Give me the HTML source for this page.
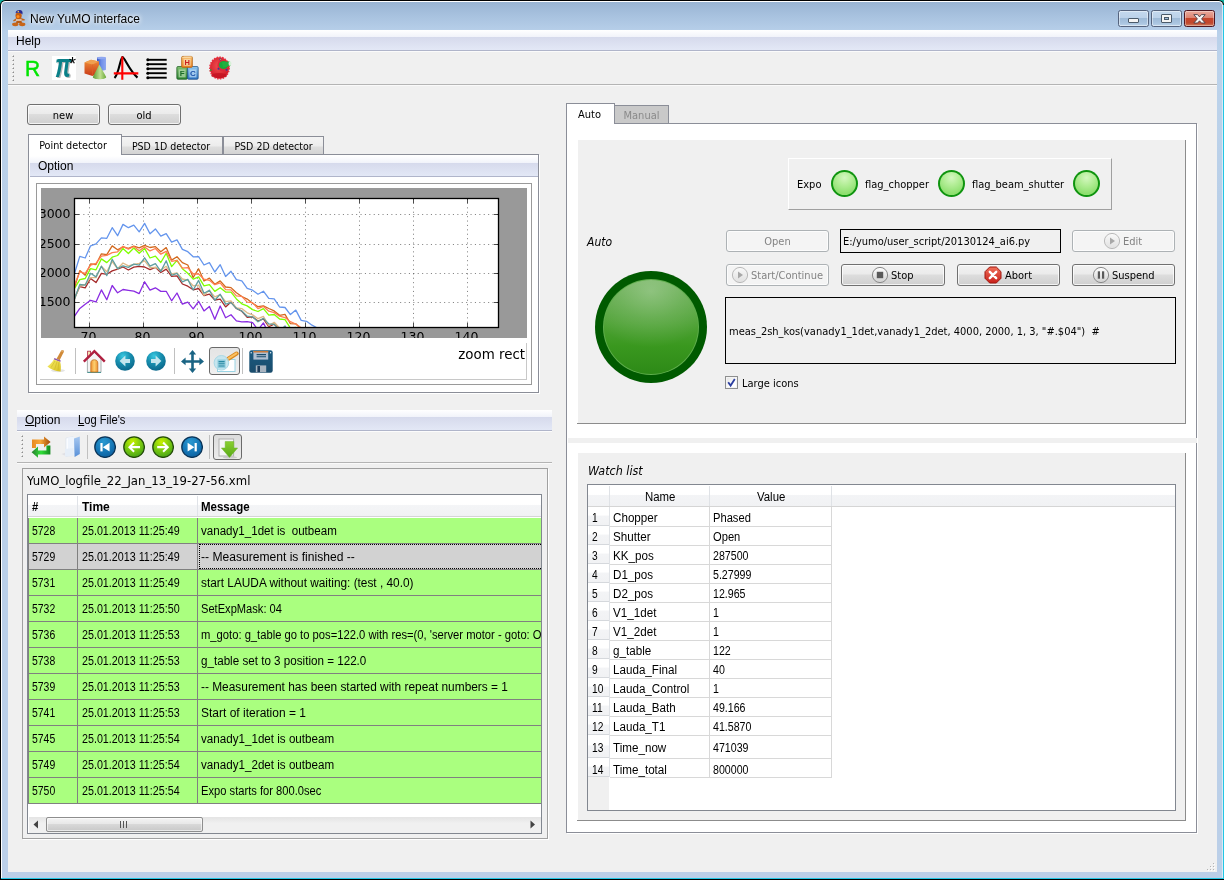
<!DOCTYPE html><html><head><meta charset="utf-8"><title>New YuMO interface</title><style>
*{box-sizing:border-box;margin:0;padding:0}
html,body{width:1224px;height:880px;overflow:hidden}
body{position:relative;background:#000;font-family:"DejaVu Sans Condensed", "Liberation Sans", sans-serif;font-size:11px;color:#000;-webkit-font-smoothing:antialiased}
.a{position:absolute}
.t{position:absolute;white-space:pre;line-height:1}
.btn{position:absolute;border:1px solid #707070;border-radius:3px;background:linear-gradient(#f2f2f2 0%,#ebebeb 45%,#dddddd 50%,#cfcfcf 100%);box-shadow:inset 0 0 0 1px rgba(255,255,255,.75)}
.btn.dis{border-color:#adb2b5;background:#f4f4f4;box-shadow:inset 0 0 0 1px #fcfcfc;color:#838383}
.sg{font-family:"Liberation Sans", "DejaVu Sans", sans-serif}
.mb{position:absolute;background:linear-gradient(#ffffff 0%,#f1f3fa 35%,#d6daec 36%,#e3e8f6 100%)}
</style></head><body><div id="win" style="position:absolute;left:0;top:0;width:1224px;height:880px;will-change:transform;">
<div class="a" style="left:0;top:0;width:1224px;height:880px;background:#10b0a0"></div>
<div class="a" style="left:0;top:0;width:1224px;height:880px;border-radius:5.5px 5.5px 0 0;background:#000"></div>
<div class="a" style="left:1223px;top:5px;width:1px;height:875px;background:#22c6e4"></div>
<div class="a" style="left:1px;top:1px;width:1222px;height:877px;border-radius:4.5px 4.5px 0 0;background:#fff"></div>
<div class="a" style="left:2px;top:2px;width:1220px;height:876px;border-radius:3.5px 3.5px 0 0;background:linear-gradient(#99b4d3 0px,#a8c2df 14px,#b8d0ea 30px,#bcd3eb 60px,#b9cfe8 200px,#bbcfe8 878px)"></div>
<div class="a" style="left:1222px;top:6px;width:1px;height:872px;background:#dbe8f5"></div>
<div class="a" style="left:1px;top:878px;width:1223px;height:1px;background:#22c6e4"></div>
<div class="a" style="left:0;top:879px;width:1224px;height:1px;background:#000"></div>
<div class="a" style="left:8px;top:30px;width:1209px;height:842px;background:#f0f0f0"></div>
<div class="t sg" style="left:30px;top:13px;font-size:12px;text-shadow:0 0 4px #fff,0 0 6px #fff">New YuMO interface</div>
<div class="mb" style="left:8px;top:30px;width:1209px;height:20px"></div>
<div class="a" style="left:8px;top:50px;width:1209px;height:1px;background:#b0b5ca;"></div>
<div class="t sg" style="left:16px;top:35px;font-size:12px;">Help</div>
<div class="a" style="left:8px;top:84px;width:1209px;height:1px;background:#b4b4b4;"></div>
<div class="a" style="left:8px;top:85px;width:1209px;height:1px;background:#fafafa;"></div>
<div class="a" style="left:12px;top:55px;width:1px;height:1px;background:#fafafa;"></div>
<div class="a" style="left:13px;top:55px;width:1px;height:1px;background:#c4c4c4;"></div>
<div class="a" style="left:12px;top:56px;width:1px;height:1px;background:#c4c4c4;"></div>
<div class="a" style="left:13px;top:56px;width:1px;height:1px;background:#8c8c8c;"></div>
<div class="a" style="left:12px;top:59px;width:1px;height:1px;background:#fafafa;"></div>
<div class="a" style="left:13px;top:59px;width:1px;height:1px;background:#c4c4c4;"></div>
<div class="a" style="left:12px;top:60px;width:1px;height:1px;background:#c4c4c4;"></div>
<div class="a" style="left:13px;top:60px;width:1px;height:1px;background:#8c8c8c;"></div>
<div class="a" style="left:12px;top:63px;width:1px;height:1px;background:#fafafa;"></div>
<div class="a" style="left:13px;top:63px;width:1px;height:1px;background:#c4c4c4;"></div>
<div class="a" style="left:12px;top:64px;width:1px;height:1px;background:#c4c4c4;"></div>
<div class="a" style="left:13px;top:64px;width:1px;height:1px;background:#8c8c8c;"></div>
<div class="a" style="left:12px;top:67px;width:1px;height:1px;background:#fafafa;"></div>
<div class="a" style="left:13px;top:67px;width:1px;height:1px;background:#c4c4c4;"></div>
<div class="a" style="left:12px;top:68px;width:1px;height:1px;background:#c4c4c4;"></div>
<div class="a" style="left:13px;top:68px;width:1px;height:1px;background:#8c8c8c;"></div>
<div class="a" style="left:12px;top:71px;width:1px;height:1px;background:#fafafa;"></div>
<div class="a" style="left:13px;top:71px;width:1px;height:1px;background:#c4c4c4;"></div>
<div class="a" style="left:12px;top:72px;width:1px;height:1px;background:#c4c4c4;"></div>
<div class="a" style="left:13px;top:72px;width:1px;height:1px;background:#8c8c8c;"></div>
<div class="a" style="left:12px;top:75px;width:1px;height:1px;background:#fafafa;"></div>
<div class="a" style="left:13px;top:75px;width:1px;height:1px;background:#c4c4c4;"></div>
<div class="a" style="left:12px;top:76px;width:1px;height:1px;background:#c4c4c4;"></div>
<div class="a" style="left:13px;top:76px;width:1px;height:1px;background:#8c8c8c;"></div>
<div class="a" style="left:12px;top:79px;width:1px;height:1px;background:#fafafa;"></div>
<div class="a" style="left:13px;top:79px;width:1px;height:1px;background:#c4c4c4;"></div>
<div class="a" style="left:12px;top:80px;width:1px;height:1px;background:#c4c4c4;"></div>
<div class="a" style="left:13px;top:80px;width:1px;height:1px;background:#8c8c8c;"></div>
<div class="a" style="left:8px;top:51px;width:1209px;height:1px;background:#fbfbfb;"></div>
<div class="a" style="left:1118px;top:10px;width:31px;height:17px;border:1px solid #55637d;border-radius:2.5px;background:linear-gradient(#c4d9ee 0%,#bcd2ea 45%,#9fbbd8 50%,#a9c4df 80%,#bcd3ea 100%);box-shadow:inset 0 0 0 1px rgba(255,255,255,.45)"></div>
<div class="a" style="left:1151px;top:10px;width:31px;height:17px;border:1px solid #55637d;border-radius:2.5px;background:linear-gradient(#c4d9ee 0%,#bcd2ea 45%,#9fbbd8 50%,#a9c4df 80%,#bcd3ea 100%);box-shadow:inset 0 0 0 1px rgba(255,255,255,.45)"></div>
<div class="a" style="left:1184px;top:10px;width:31px;height:17px;border:1px solid #4e1620;border-radius:2.5px;background:linear-gradient(#e9a99c 0%,#dc8573 45%,#c6452c 50%,#c0482e 80%,#d08060 100%);box-shadow:inset 0 0 0 1px rgba(255,255,255,.35)"></div>
<div class="a" style="left:1128px;top:18px;width:11px;height:5px;border:1px solid #4a5a6a;border-radius:1px;background:#f4f4f4"></div>
<div class="a" style="left:1161px;top:14px;width:11px;height:9px;border:1px solid #4a5a6a;border-radius:1px;background:#f4f4f4"></div>
<div class="a" style="left:1164px;top:17px;width:5px;height:3px;border:1px solid #4a5a6a;background:#9fbbd8"></div>
<svg class="a" style="left:1193px;top:13px" width="13" height="11" viewBox="0 0 13 11"><path d="M0.8 1.6 L4.6 1.6 L6.5 3.9 L8.4 1.6 L12.2 1.6 L8.6 5.9 L12.2 10 L8.4 10 L6.5 7.8 L4.6 10 L0.8 10 L4.4 5.9 Z" fill="#f6f6f6" stroke="#4a4048" stroke-width="0.9"/></svg>
<div class="btn" style="left:27px;top:104px;width:73px;height:21px"></div>
<div class="btn" style="left:108px;top:104px;width:73px;height:21px"></div>
<div class="t" style="left:26px;top:110px;font-size:11px;width:74px;text-align:center">new</div>
<div class="t" style="left:107px;top:110px;font-size:11px;width:74px;text-align:center">old</div>
<div class="a" style="left:28px;top:154px;width:511px;height:239px;border:1px solid #8b8e98;background:#ffffff;"></div>
<div class="a" style="left:539px;top:155px;width:1px;height:238px;background:#fff;"></div>
<div class="a" style="left:29px;top:393px;width:511px;height:1px;background:#fff;"></div>
<div class="a" style="left:121px;top:136px;width:102px;height:19px;border:1px solid #8b8e98;border-bottom:none;background:linear-gradient(#f4f4f4 0%,#ececec 50%,#dedede 55%,#d2d2d2 100%)"></div>
<div class="t" style="left:119.5px;top:141px;font-size:11px;width:102px;text-align:center;transform:scaleX(.955)">PSD 1D detector</div>
<div class="a" style="left:223px;top:136px;width:101px;height:19px;border:1px solid #8b8e98;border-bottom:none;background:linear-gradient(#f4f4f4 0%,#ececec 50%,#dedede 55%,#d2d2d2 100%)"></div>
<div class="t" style="left:223px;top:141px;font-size:11px;width:101px;text-align:center;transform:scaleX(.955)">PSD 2D detector</div>
<div class="a" style="left:28px;top:154px;width:511px;height:1px;background:#8b8e98;"></div>
<div class="a" style="left:28px;top:134px;width:94px;height:20px;border:1px solid #8b8e98;border-bottom:none;background:#fff"></div>
<div class="a" style="left:29px;top:154px;width:92px;height:1px;background:#fff;"></div>
<div class="t" style="left:26px;top:140px;font-size:11px;width:94px;text-align:center;transform:scaleX(.975)">Point detector</div>
<div class="mb" style="left:30px;top:156px;width:508px;height:20px"></div>
<div class="a" style="left:30px;top:176px;width:508px;height:1px;background:#b0b5ca;"></div>
<div class="t sg" style="left:38px;top:160px;font-size:12px;">Option</div>
<div class="a" style="left:36px;top:183px;width:496px;height:202px;border:1px solid #9a9a9a;background:#ffffff;"></div>
<div class="a" style="left:40px;top:379px;width:487px;height:1px;background:#c8c8c8;"></div>
<div class="a" style="left:526px;top:343px;width:1px;height:37px;background:#c8c8c8;"></div>
<svg class="a" style="left:41px;top:188px;overflow:hidden" width="486" height="150" viewBox="0 0 486 150"><rect x="0" y="0" width="486" height="150" fill="#999999"/><rect x="33.5" y="10.5" width="424.0" height="129.0" fill="#ffffff"/><defs><clipPath id="axc"><rect x="33.5" y="10.5" width="424.0" height="129.0"/></clipPath></defs><path d="M48.5 10.5V139.5M102.5 10.5V139.5M156.5 10.5V139.5M210.5 10.5V139.5M264.5 10.5V139.5M318.5 10.5V139.5M372.5 10.5V139.5M426.5 10.5V139.5M33.5 114.5H457.5M33.5 85.5H457.5M33.5 56.5H457.5M33.5 26.5H457.5" stroke="#000" stroke-opacity="0.8" stroke-width="0.6" stroke-dasharray="1.1 3.3" fill="none"/><polyline clip-path="url(#axc)" points="28.0,127.2 33.4,128.4 38.8,120.4 44.2,116.2 49.6,112.3 55.0,113.9 60.4,101.9 65.8,111.8 71.2,97.5 76.6,104.8 82.0,101.5 87.4,102.4 92.8,103.2 98.2,105.6 103.6,93.8 109.0,102.1 114.4,99.8 119.8,103.4 125.2,103.3 130.6,112.8 136.0,105.0 141.4,116.1 146.8,114.1 152.2,120.8 157.6,113.3 163.0,122.9 168.4,118.5 173.8,131.3 179.2,118.0 184.6,129.7 190.0,126.7 195.4,132.9 200.8,133.9 206.2,133.7 211.6,134.6 217.0,141.9 222.4,134.9 227.8,145.6 233.2,140.4 238.6,146.1 244.0,138.2 249.4,147.3 254.8,150.0 260.2,155.7 265.6,153.0 271.0,159.5 276.4,155.6 281.8,158.8 287.2,158.5 292.6,164.7 298.0,162.4 303.4,168.2" fill="none" stroke="#8A2BE2" stroke-width="1.3" stroke-linejoin="round"/><polyline clip-path="url(#axc)" points="28.0,111.1 33.4,110.4 38.8,98.6 44.2,99.8 49.6,90.5 55.0,94.6 60.4,85.3 65.8,86.3 71.2,82.9 76.6,81.1 82.0,79.0 87.4,82.0 92.8,79.2 98.2,78.4 103.6,79.0 109.0,81.6 114.4,79.4 119.8,84.5 125.2,81.1 130.6,88.4 136.0,87.9 141.4,96.0 146.8,98.2 152.2,101.8 157.6,100.5 163.0,107.6 168.4,106.1 173.8,112.0 179.2,111.2 184.6,118.9 190.0,114.1 195.4,120.5 200.8,123.2 206.2,129.4 211.6,128.9 217.0,133.0 222.4,130.9 227.8,138.6 233.2,136.2 238.6,141.0 244.0,140.7 249.4,146.6 254.8,149.7 260.2,152.2 265.6,153.0 271.0,159.5 276.4,160.7 281.8,164.1 287.2,161.7 292.6,168.7 298.0,167.3 303.4,172.5" fill="none" stroke="#A52A2A" stroke-width="1.3" stroke-linejoin="round"/><polyline clip-path="url(#axc)" points="28.0,111.1 33.4,111.5 38.8,98.0 44.2,96.5 49.6,89.6 55.0,89.6 60.4,78.3 65.8,83.7 71.2,73.5 76.6,80.8 82.0,75.0 87.4,77.8 92.8,76.5 98.2,75.3 103.6,72.9 109.0,79.7 114.4,79.4 119.8,82.1 125.2,78.3 130.6,85.9 136.0,84.9 141.4,91.0 146.8,92.1 152.2,97.8 157.6,97.1 163.0,107.2 168.4,102.3 173.8,108.9 179.2,106.6 184.6,113.6 190.0,112.9 195.4,119.9 200.8,120.6 206.2,124.8 211.6,126.9 217.0,130.7 222.4,128.4 227.8,137.8 233.2,134.3 238.6,140.0 244.0,142.2 249.4,145.5 254.8,148.2 260.2,150.4 265.6,153.2 271.0,156.3 276.4,156.4 281.8,162.5 287.2,160.8 292.6,168.6 298.0,167.9 303.4,170.8" fill="none" stroke="#DEB887" stroke-width="1.3" stroke-linejoin="round"/><polyline clip-path="url(#axc)" points="28.0,108.4 33.4,111.2 38.8,96.5 44.2,97.2 49.6,85.3 55.0,88.9 60.4,78.2 65.8,87.6 71.2,71.2 76.6,80.6 82.0,77.8 87.4,79.4 92.8,76.1 98.2,77.1 103.6,69.8 109.0,78.2 114.4,75.7 119.8,83.4 125.2,72.8 130.6,87.3 136.0,85.3 141.4,93.9 146.8,91.4 152.2,102.0 157.6,92.4 163.0,105.2 168.4,102.3 173.8,112.3 179.2,106.3 184.6,116.1 190.0,114.6 195.4,120.4 200.8,123.0 206.2,128.2 211.6,128.8 217.0,133.8 222.4,130.4 227.8,135.9 233.2,136.4 238.6,142.3 244.0,138.2 249.4,146.5 254.8,148.6 260.2,153.4 265.6,152.0 271.0,159.4 276.4,159.2 281.8,165.2 287.2,162.9 292.6,167.4 298.0,167.8 303.4,173.2" fill="none" stroke="#5F9EA0" stroke-width="1.3" stroke-linejoin="round"/><polyline clip-path="url(#axc)" points="28.0,101.1 33.4,100.7 38.8,91.6 44.2,90.5 49.6,80.6 55.0,81.8 60.4,70.9 65.8,74.6 71.2,69.2 76.6,67.5 82.0,60.5 87.4,65.5 92.8,60.0 98.2,65.2 103.6,60.4 109.0,70.0 114.4,68.1 119.8,74.5 125.2,65.3 130.6,78.6 136.0,72.3 141.4,80.7 146.8,85.3 152.2,91.1 157.6,88.9 163.0,97.9 168.4,96.6 173.8,103.4 179.2,99.7 184.6,104.0 190.0,104.1 195.4,110.9 200.8,115.8 206.2,117.9 211.6,121.6 217.0,123.5 222.4,120.7 227.8,127.2 233.2,126.5 238.6,131.0 244.0,131.7 249.4,140.1 254.8,139.5 260.2,144.9 265.6,147.5 271.0,150.8 276.4,154.2 281.8,156.2 287.2,156.0 292.6,161.7 298.0,163.4 303.4,164.3" fill="none" stroke="#7FFF00" stroke-width="1.3" stroke-linejoin="round"/><polyline clip-path="url(#axc)" points="28.0,95.9 33.4,99.8 38.8,82.6 44.2,87.2 49.6,76.0 55.0,76.5 60.4,65.8 65.8,66.6 71.2,57.9 76.6,61.8 82.0,58.9 87.4,60.3 92.8,58.2 98.2,59.9 103.6,57.4 109.0,59.5 114.4,58.6 119.8,63.8 125.2,59.6 130.6,72.1 136.0,68.7 141.4,74.6 146.8,77.0 152.2,89.4 157.6,80.8 163.0,93.0 168.4,90.1 173.8,96.2 179.2,92.9 184.6,99.0 190.0,99.6 195.4,104.7 200.8,108.5 206.2,111.1 211.6,115.2 217.0,118.7 222.4,117.9 227.8,120.5 233.2,122.9 238.6,127.3 244.0,126.3 249.4,135.6 254.8,135.8 260.2,141.2 265.6,142.5 271.0,147.0 276.4,144.8 281.8,154.3 287.2,152.0 292.6,156.3 298.0,156.8 303.4,162.7" fill="none" stroke="#D2691E" stroke-width="1.3" stroke-linejoin="round"/><polyline clip-path="url(#axc)" points="28.0,97.8 33.4,97.0 38.8,83.9 44.2,85.3 49.6,77.2 55.0,75.3 60.4,68.2 65.8,67.3 71.2,64.6 76.6,63.8 82.0,58.3 87.4,61.1 92.8,58.5 98.2,62.8 103.6,58.9 109.0,62.9 114.4,60.5 119.8,66.2 125.2,63.4 130.6,73.3 136.0,72.3 141.4,80.2 146.8,79.7 152.2,86.0 157.6,86.0 163.0,91.2 168.4,92.3 173.8,96.7 179.2,94.9 184.6,101.7 190.0,101.9 195.4,107.9 200.8,108.4 206.2,114.1 211.6,114.6 217.0,120.6 222.4,118.4 227.8,123.2 233.2,124.6 238.6,128.2 244.0,129.6 249.4,133.7 254.8,136.0 260.2,139.7 265.6,142.0 271.0,145.1 276.4,146.8 281.8,150.7 287.2,152.3 292.6,155.7 298.0,157.9 303.4,161.2" fill="none" stroke="#FF7F50" stroke-width="1.3" stroke-linejoin="round"/><polyline clip-path="url(#axc)" points="28.0,79.9 33.4,85.7 38.8,68.4 44.2,70.0 49.6,57.8 55.0,55.9 60.4,49.9 65.8,50.3 71.2,39.7 76.6,47.7 82.0,36.4 87.4,39.7 92.8,37.1 98.2,43.8 103.6,35.4 109.0,45.8 114.4,40.9 119.8,48.1 125.2,45.6 130.6,54.2 136.0,51.9 141.4,61.4 146.8,63.7 152.2,68.8 157.6,68.6 163.0,77.0 168.4,74.7 173.8,84.0 179.2,76.7 184.6,88.5 190.0,83.3 195.4,91.7 200.8,92.8 206.2,100.4 211.6,102.2 217.0,106.2 222.4,103.2 227.8,110.3 233.2,110.8 238.6,119.0 244.0,119.5 249.4,126.6 254.8,122.1 260.2,132.4 265.6,133.3 271.0,137.2 276.4,140.0 281.8,145.7 287.2,143.0 292.6,149.6 298.0,150.4 303.4,155.2" fill="none" stroke="#6495ED" stroke-width="1.3" stroke-linejoin="round"/><rect x="33.5" y="10.5" width="424.0" height="129.0" fill="none" stroke="#000" stroke-width="1.3"/><path d="M48.5 10.5v4.5M48.5 139.5v-4.5M102.5 10.5v4.5M102.5 139.5v-4.5M156.5 10.5v4.5M156.5 139.5v-4.5M210.5 10.5v4.5M210.5 139.5v-4.5M264.5 10.5v4.5M264.5 139.5v-4.5M318.5 10.5v4.5M318.5 139.5v-4.5M372.5 10.5v4.5M372.5 139.5v-4.5M426.5 10.5v4.5M426.5 139.5v-4.5M33.5 114.5h4.5M457.5 114.5h-4.5M33.5 85.5h4.5M457.5 85.5h-4.5M33.5 56.5h4.5M457.5 56.5h-4.5M33.5 26.5h4.5M457.5 26.5h-4.5" stroke="#000" stroke-width="0.7" fill="none"/><text x="47.5" y="152.5" text-anchor="middle" font-family="DejaVu Sans, Liberation Sans, sans-serif" font-size="12.5" fill="#000">70</text><text x="101.5" y="152.5" text-anchor="middle" font-family="DejaVu Sans, Liberation Sans, sans-serif" font-size="12.5" fill="#000">80</text><text x="155.5" y="152.5" text-anchor="middle" font-family="DejaVu Sans, Liberation Sans, sans-serif" font-size="12.5" fill="#000">90</text><text x="209.5" y="152.5" text-anchor="middle" font-family="DejaVu Sans, Liberation Sans, sans-serif" font-size="12.5" fill="#000">100</text><text x="263.5" y="152.5" text-anchor="middle" font-family="DejaVu Sans, Liberation Sans, sans-serif" font-size="12.5" fill="#000">110</text><text x="317.5" y="152.5" text-anchor="middle" font-family="DejaVu Sans, Liberation Sans, sans-serif" font-size="12.5" fill="#000">120</text><text x="371.5" y="152.5" text-anchor="middle" font-family="DejaVu Sans, Liberation Sans, sans-serif" font-size="12.5" fill="#000">130</text><text x="425.5" y="152.5" text-anchor="middle" font-family="DejaVu Sans, Liberation Sans, sans-serif" font-size="12.5" fill="#000">140</text> <text x="29.5" y="118.1" text-anchor="end" font-family="DejaVu Sans, Liberation Sans, sans-serif" font-size="12.5" fill="#000">1500</text> <text x="29.5" y="89.1" text-anchor="end" font-family="DejaVu Sans, Liberation Sans, sans-serif" font-size="12.5" fill="#000">2000</text> <text x="29.5" y="60.1" text-anchor="end" font-family="DejaVu Sans, Liberation Sans, sans-serif" font-size="12.5" fill="#000">2500</text> <text x="29.5" y="30.1" text-anchor="end" font-family="DejaVu Sans, Liberation Sans, sans-serif" font-size="12.5" fill="#000">3000</text></svg>
<div class="t" style="left:439px;top:348px;font-size:13.4px;font-family:'DejaVu Sans','Liberation Sans',sans-serif;width:86px;text-align:right">zoom rect</div>
<div class="a" style="left:75px;top:348px;width:1px;height:26px;background:#c0c0c0;"></div>
<div class="a" style="left:174px;top:348px;width:1px;height:26px;background:#c0c0c0;"></div>
<div class="a" style="left:242px;top:348px;width:1px;height:26px;background:#c0c0c0;"></div>
<div class="a" style="left:209px;top:347px;width:31px;height:28px;border:1px solid #6a6a6a;border-radius:3px;background:linear-gradient(#e4e4e4,#f0f0f0)"></div>
<div class="mb" style="left:17px;top:410px;width:535px;height:20px"></div>
<div class="a" style="left:17px;top:430px;width:535px;height:1px;background:#b0b5ca;"></div>
<div class="a" style="left:17px;top:431px;width:535px;height:1px;background:#fcfcfc;"></div>
<div class="t sg" style="left:25px;top:414px;font-size:12px;"><u>O</u>ption</div>
<div class="t sg" style="left:78px;top:414px;font-size:12px;transform-origin:0 0;transform:scaleX(.93)"><u>L</u>og File's</div>
<div class="a" style="left:17px;top:462px;width:535px;height:1px;background:#b4b4b4;"></div>
<div class="a" style="left:17px;top:463px;width:535px;height:1px;background:#fafafa;"></div>
<div class="a" style="left:21px;top:435px;width:1px;height:1px;background:#fafafa;"></div>
<div class="a" style="left:22px;top:435px;width:1px;height:1px;background:#c4c4c4;"></div>
<div class="a" style="left:21px;top:436px;width:1px;height:1px;background:#c4c4c4;"></div>
<div class="a" style="left:22px;top:436px;width:1px;height:1px;background:#8c8c8c;"></div>
<div class="a" style="left:21px;top:439px;width:1px;height:1px;background:#fafafa;"></div>
<div class="a" style="left:22px;top:439px;width:1px;height:1px;background:#c4c4c4;"></div>
<div class="a" style="left:21px;top:440px;width:1px;height:1px;background:#c4c4c4;"></div>
<div class="a" style="left:22px;top:440px;width:1px;height:1px;background:#8c8c8c;"></div>
<div class="a" style="left:21px;top:443px;width:1px;height:1px;background:#fafafa;"></div>
<div class="a" style="left:22px;top:443px;width:1px;height:1px;background:#c4c4c4;"></div>
<div class="a" style="left:21px;top:444px;width:1px;height:1px;background:#c4c4c4;"></div>
<div class="a" style="left:22px;top:444px;width:1px;height:1px;background:#8c8c8c;"></div>
<div class="a" style="left:21px;top:447px;width:1px;height:1px;background:#fafafa;"></div>
<div class="a" style="left:22px;top:447px;width:1px;height:1px;background:#c4c4c4;"></div>
<div class="a" style="left:21px;top:448px;width:1px;height:1px;background:#c4c4c4;"></div>
<div class="a" style="left:22px;top:448px;width:1px;height:1px;background:#8c8c8c;"></div>
<div class="a" style="left:21px;top:451px;width:1px;height:1px;background:#fafafa;"></div>
<div class="a" style="left:22px;top:451px;width:1px;height:1px;background:#c4c4c4;"></div>
<div class="a" style="left:21px;top:452px;width:1px;height:1px;background:#c4c4c4;"></div>
<div class="a" style="left:22px;top:452px;width:1px;height:1px;background:#8c8c8c;"></div>
<div class="a" style="left:21px;top:455px;width:1px;height:1px;background:#fafafa;"></div>
<div class="a" style="left:22px;top:455px;width:1px;height:1px;background:#c4c4c4;"></div>
<div class="a" style="left:21px;top:456px;width:1px;height:1px;background:#c4c4c4;"></div>
<div class="a" style="left:22px;top:456px;width:1px;height:1px;background:#8c8c8c;"></div>
<div class="a" style="left:87px;top:435px;width:1px;height:24px;background:#c0c0c0;"></div>
<div class="a" style="left:209px;top:435px;width:1px;height:24px;background:#c0c0c0;"></div>
<div class="a" style="left:213px;top:434px;width:29px;height:26px;border:1px solid #6a6a6a;border-radius:3px;background:linear-gradient(#dcdcdc,#ececec)"></div>
<div class="a" style="left:22px;top:468px;width:526px;height:371px;border:1px solid #a0a0a0;background:#f0f0f0;"></div>
<div class="a" style="left:23px;top:839px;width:526px;height:1px;background:#fff;"></div>
<div class="a" style="left:548px;top:469px;width:1px;height:370px;background:#fff;"></div>
<div class="t" style="left:27px;top:474px;font-size:13px;">YuMO_logfile_22_Jan_13_19-27-56.xml</div>
<div class="a" style="left:27px;top:494px;width:515px;height:340px;background:#828790;"></div>
<div class="a" style="left:28px;top:495px;width:513px;height:338px;background:#ffffff;"></div>
<div class="a" style="left:28px;top:518px;width:1px;height:286px;background:#808080;"></div>
<div class="a" style="left:28px;top:495px;width:513px;height:21px;background:linear-gradient(#ffffff 0%,#ffffff 45%,#f4f5f7 50%,#f1f2f4 100%)"></div>
<div class="a" style="left:28px;top:516px;width:513px;height:1px;background:#d5d5d5;"></div>
<div class="a" style="left:77px;top:496px;width:1px;height:20px;background:#e0e3e8;"></div>
<div class="a" style="left:197px;top:496px;width:1px;height:20px;background:#e0e3e8;"></div>
<div class="t sg" style="left:32px;top:501px;font-size:12.5px;transform-origin:0 0;transform:scaleX(0.9);font-weight:bold;">#</div>
<div class="t sg" style="left:82px;top:501px;font-size:12.5px;transform-origin:0 0;transform:scaleX(0.96);font-weight:bold;">Time</div>
<div class="t sg" style="left:201px;top:501px;font-size:12.5px;transform-origin:0 0;transform:scaleX(0.92);font-weight:bold;">Message</div>
<div class="a" style="left:29px;top:518px;width:512px;height:286px;overflow:hidden">
<div class="a" style="left:0;top:0px;width:512px;height:25px;background:#aaff7f"></div>
<div class="a" style="left:0;top:25px;width:512px;height:1px;background:#808080"></div>
<div class="t sg" style="left:2.6px;top:7px;font-size:12.5px;transform-origin:0 0;transform:scaleX(0.834);">5728</div>
<div class="t sg" style="left:52.8px;top:7px;font-size:12.5px;transform-origin:0 0;transform:scaleX(0.858);">25.01.2013 11:25:49</div>
<div class="t sg" style="left:172.3px;top:7px;font-size:12.5px;transform-origin:0 0;transform:scaleX(0.926);">vanady1_1det is  outbeam</div>
<div class="a" style="left:0;top:26px;width:512px;height:25px;background:#d2d2d2"></div>
<div class="a" style="left:0;top:51px;width:512px;height:1px;background:#808080"></div>
<div class="t sg" style="left:2.6px;top:33px;font-size:12.5px;transform-origin:0 0;transform:scaleX(0.834);">5729</div>
<div class="t sg" style="left:52.8px;top:33px;font-size:12.5px;transform-origin:0 0;transform:scaleX(0.858);">25.01.2013 11:25:49</div>
<div class="t sg" style="left:172.3px;top:33px;font-size:12.5px;transform-origin:0 0;transform:scaleX(0.967);">-- Measurement is finished --</div>
<div class="a" style="left:0;top:52px;width:512px;height:25px;background:#aaff7f"></div>
<div class="a" style="left:0;top:77px;width:512px;height:1px;background:#808080"></div>
<div class="t sg" style="left:2.6px;top:59px;font-size:12.5px;transform-origin:0 0;transform:scaleX(0.834);">5731</div>
<div class="t sg" style="left:52.8px;top:59px;font-size:12.5px;transform-origin:0 0;transform:scaleX(0.858);">25.01.2013 11:25:49</div>
<div class="t sg" style="left:172.3px;top:59px;font-size:12.5px;transform-origin:0 0;transform:scaleX(0.947);">start LAUDA without waiting: (test , 40.0)</div>
<div class="a" style="left:0;top:78px;width:512px;height:25px;background:#aaff7f"></div>
<div class="a" style="left:0;top:103px;width:512px;height:1px;background:#808080"></div>
<div class="t sg" style="left:2.6px;top:85px;font-size:12.5px;transform-origin:0 0;transform:scaleX(0.834);">5732</div>
<div class="t sg" style="left:52.8px;top:85px;font-size:12.5px;transform-origin:0 0;transform:scaleX(0.858);">25.01.2013 11:25:50</div>
<div class="t sg" style="left:172.3px;top:85px;font-size:12.5px;transform-origin:0 0;transform:scaleX(0.889);">SetExpMask: 04</div>
<div class="a" style="left:0;top:104px;width:512px;height:25px;background:#aaff7f"></div>
<div class="a" style="left:0;top:129px;width:512px;height:1px;background:#808080"></div>
<div class="t sg" style="left:2.6px;top:111px;font-size:12.5px;transform-origin:0 0;transform:scaleX(0.834);">5736</div>
<div class="t sg" style="left:52.8px;top:111px;font-size:12.5px;transform-origin:0 0;transform:scaleX(0.858);">25.01.2013 11:25:53</div>
<div class="t sg" style="left:172.3px;top:111px;font-size:12.5px;transform-origin:0 0;transform:scaleX(0.897);">m_goto: g_table go to pos=122.0 with res=(0, 'server motor - goto: OK')</div>
<div class="a" style="left:0;top:130px;width:512px;height:25px;background:#aaff7f"></div>
<div class="a" style="left:0;top:155px;width:512px;height:1px;background:#808080"></div>
<div class="t sg" style="left:2.6px;top:137px;font-size:12.5px;transform-origin:0 0;transform:scaleX(0.834);">5738</div>
<div class="t sg" style="left:52.8px;top:137px;font-size:12.5px;transform-origin:0 0;transform:scaleX(0.858);">25.01.2013 11:25:53</div>
<div class="t sg" style="left:172.3px;top:137px;font-size:12.5px;transform-origin:0 0;transform:scaleX(0.931);">g_table set to 3 position = 122.0</div>
<div class="a" style="left:0;top:156px;width:512px;height:25px;background:#aaff7f"></div>
<div class="a" style="left:0;top:181px;width:512px;height:1px;background:#808080"></div>
<div class="t sg" style="left:2.6px;top:163px;font-size:12.5px;transform-origin:0 0;transform:scaleX(0.834);">5739</div>
<div class="t sg" style="left:52.8px;top:163px;font-size:12.5px;transform-origin:0 0;transform:scaleX(0.858);">25.01.2013 11:25:53</div>
<div class="t sg" style="left:172.3px;top:163px;font-size:12.5px;transform-origin:0 0;transform:scaleX(0.951);">-- Measurement has been started with repeat numbers = 1</div>
<div class="a" style="left:0;top:182px;width:512px;height:25px;background:#aaff7f"></div>
<div class="a" style="left:0;top:207px;width:512px;height:1px;background:#808080"></div>
<div class="t sg" style="left:2.6px;top:189px;font-size:12.5px;transform-origin:0 0;transform:scaleX(0.834);">5741</div>
<div class="t sg" style="left:52.8px;top:189px;font-size:12.5px;transform-origin:0 0;transform:scaleX(0.858);">25.01.2013 11:25:53</div>
<div class="t sg" style="left:172.3px;top:189px;font-size:12.5px;transform-origin:0 0;transform:scaleX(0.959);">Start of iteration = 1</div>
<div class="a" style="left:0;top:208px;width:512px;height:25px;background:#aaff7f"></div>
<div class="a" style="left:0;top:233px;width:512px;height:1px;background:#808080"></div>
<div class="t sg" style="left:2.6px;top:215px;font-size:12.5px;transform-origin:0 0;transform:scaleX(0.834);">5745</div>
<div class="t sg" style="left:52.8px;top:215px;font-size:12.5px;transform-origin:0 0;transform:scaleX(0.858);">25.01.2013 11:25:54</div>
<div class="t sg" style="left:172.3px;top:215px;font-size:12.5px;transform-origin:0 0;transform:scaleX(0.93);">vanady1_1det is outbeam</div>
<div class="a" style="left:0;top:234px;width:512px;height:25px;background:#aaff7f"></div>
<div class="a" style="left:0;top:259px;width:512px;height:1px;background:#808080"></div>
<div class="t sg" style="left:2.6px;top:241px;font-size:12.5px;transform-origin:0 0;transform:scaleX(0.834);">5749</div>
<div class="t sg" style="left:52.8px;top:241px;font-size:12.5px;transform-origin:0 0;transform:scaleX(0.858);">25.01.2013 11:25:54</div>
<div class="t sg" style="left:172.3px;top:241px;font-size:12.5px;transform-origin:0 0;transform:scaleX(0.93);">vanady1_2det is outbeam</div>
<div class="a" style="left:0;top:260px;width:512px;height:25px;background:#aaff7f"></div>
<div class="a" style="left:0;top:285px;width:512px;height:1px;background:#808080"></div>
<div class="t sg" style="left:2.6px;top:267px;font-size:12.5px;transform-origin:0 0;transform:scaleX(0.834);">5750</div>
<div class="t sg" style="left:52.8px;top:267px;font-size:12.5px;transform-origin:0 0;transform:scaleX(0.858);">25.01.2013 11:25:54</div>
<div class="t sg" style="left:172.3px;top:267px;font-size:12.5px;transform-origin:0 0;transform:scaleX(0.893);">Expo starts for 800.0sec</div>
<div class="a" style="left:48px;top:0;width:1px;height:286px;background:#808080"></div>
<div class="a" style="left:168px;top:0;width:1px;height:286px;background:#808080"></div>
<div class="a" style="left:170px;top:26px;width:346px;height:25px;border:1px dotted #000"></div>
</div>
<div class="a" style="left:29px;top:817px;width:512px;height:16px;background:linear-gradient(#e4e4e4,#f0f0f0 40%,#f0f0f0)"></div>
<div class="a" style="left:46px;top:817px;width:157px;height:15px;border:1px solid #8e8e8e;border-radius:2px;background:linear-gradient(#f4f4f4 0%,#e8e8e8 45%,#d8d8d8 50%,#c8c8c8 100%);box-shadow:inset 0 0 0 1px rgba(255,255,255,.6)"></div>
<div class="a" style="left:120px;top:821px;width:1px;height:7px;background:#555;"></div>
<div class="a" style="left:123px;top:821px;width:1px;height:7px;background:#555;"></div>
<div class="a" style="left:126px;top:821px;width:1px;height:7px;background:#555;"></div>
<svg class="a" style="left:33px;top:820px" width="6" height="9"><path d="M5 0.5L0.5 4.5L5 8.5Z" fill="#444"/></svg>
<svg class="a" style="left:529.5px;top:820px" width="6" height="9"><path d="M0.5 0.5L5 4.5L0.5 8.5Z" fill="#444"/></svg>
<div class="a" style="left:566px;top:123px;width:631px;height:710px;border:1px solid #8b8e98;background:#ffffff;"></div>
<div class="a" style="left:1197px;top:124px;width:1px;height:709px;background:#fff;"></div>
<div class="a" style="left:567px;top:833px;width:631px;height:1px;background:#fff;"></div>
<div class="a" style="left:614px;top:105px;width:55px;height:19px;border:1px solid #8b8e98;background:#c9c9c9"></div>
<div class="t" style="left:614px;top:110px;font-size:11px;width:55px;text-align:center;color:#8a8a8a">Manual</div>
<div class="a" style="left:566px;top:103px;width:49px;height:20px;border:1px solid #8b8e98;border-bottom:none;background:#fff"></div>
<div class="a" style="left:567px;top:123px;width:47px;height:1px;background:#fff;"></div>
<div class="t" style="left:566px;top:109px;font-size:11px;width:47px;text-align:center">Auto</div>
<div class="a" style="left:578px;top:140px;width:608px;height:284px;background:#f0f0f0;"></div>
<div class="a" style="left:577px;top:423px;width:609px;height:1px;background:#8c8c8c;"></div>
<div class="a" style="left:1185px;top:140px;width:1px;height:284px;background:#8c8c8c;"></div>
<div class="a" style="left:568px;top:438px;width:629px;height:5px;background:#f0f0f0;"></div>
<div class="a" style="left:578px;top:453px;width:608px;height:368px;background:#f0f0f0;"></div>
<div class="a" style="left:577px;top:820px;width:609px;height:1px;background:#8c8c8c;"></div>
<div class="a" style="left:1185px;top:453px;width:1px;height:368px;background:#8c8c8c;"></div>
<div class="a" style="left:788px;top:158px;width:324px;height:52px;border:1px solid;border-color:#fff #a0a0a0 #a0a0a0 #fff;background:#f0f0f0"></div>
<div class="a" style="left:830.5px;top:170px;width:27px;height:27px;border-radius:50%;background:#0f940f"></div>
<div class="a" style="left:832.5px;top:172px;width:23px;height:23px;border-radius:50%;background:radial-gradient(circle at 50% 25%,#d4f7c0 0%,#b4ee98 35%,#8fe070 75%,#86dc66 100%)"></div>
<div class="a" style="left:937.5px;top:170px;width:27px;height:27px;border-radius:50%;background:#0f940f"></div>
<div class="a" style="left:939.5px;top:172px;width:23px;height:23px;border-radius:50%;background:radial-gradient(circle at 50% 25%,#d4f7c0 0%,#b4ee98 35%,#8fe070 75%,#86dc66 100%)"></div>
<div class="a" style="left:1072.5px;top:170px;width:27px;height:27px;border-radius:50%;background:#0f940f"></div>
<div class="a" style="left:1074.5px;top:172px;width:23px;height:23px;border-radius:50%;background:radial-gradient(circle at 50% 25%,#d4f7c0 0%,#b4ee98 35%,#8fe070 75%,#86dc66 100%)"></div>
<div class="t" style="left:797px;top:179px;font-size:11px;">Expo</div>
<div class="t" style="left:865px;top:179px;font-size:11px;">flag_chopper</div>
<div class="t" style="left:972px;top:179px;font-size:11px;">flag_beam_shutter</div>
<div class="t" style="left:587px;top:236px;font-size:12px;font-style:italic">Auto</div>
<div class="a" style="left:595px;top:271px;width:112px;height:112px;border-radius:50%;background:#005a00"></div>
<div class="a" style="left:603px;top:279px;width:96px;height:96px;border-radius:50%;background:#5fae4c"></div>
<div class="a" style="left:604px;top:280px;width:94px;height:94px;border-radius:50%;background:radial-gradient(ellipse 70% 60% at 50% 12%,rgba(255,255,255,.28) 0%,rgba(255,255,255,.12) 50%,rgba(255,255,255,0) 100%),linear-gradient(#6aaf55 0%,#4fa236 45%,#3a981f 70%,#2d8a17 100%)"></div>
<div class="btn dis" style="left:726px;top:230px;width:103px;height:22px"></div>
<div class="t" style="left:726px;top:236px;font-size:11px;width:103px;text-align:center;color:#838383">Open</div>
<div class="a" style="left:840px;top:229px;width:221px;height:24px;border:1px solid #000;background:#f0f0f0;"></div>
<div class="t" style="left:843px;top:236px;font-size:11px;">E:/yumo/user_script/20130124_ai6.py</div>
<div class="btn dis" style="left:1072px;top:230px;width:103px;height:22px"></div>
<div class="t" style="left:1123px;top:236px;font-size:11px;color:#838383">Edit</div>
<div class="btn dis" style="left:726px;top:264px;width:103px;height:22px"></div>
<div class="t" style="left:751px;top:270px;font-size:11px;color:#838383">Start/Continue</div>
<div class="btn" style="left:841px;top:264px;width:104px;height:22px"></div>
<div class="t" style="left:891px;top:270px;font-size:11px;">Stop</div>
<div class="btn" style="left:957px;top:264px;width:103px;height:22px"></div>
<div class="t" style="left:1005px;top:270px;font-size:11px;">Abort</div>
<div class="btn" style="left:1072px;top:264px;width:103px;height:22px"></div>
<div class="t" style="left:1112px;top:270px;font-size:11px;">Suspend</div>
<svg class="a" style="left:1103px;top:232px;opacity:0.55" width="18" height="18" viewBox="0 0 18 18"><defs><linearGradient id="cgplay" x1="0" y1="0" x2="0" y2="1"><stop offset="0" stop-color="#ffffff"/><stop offset="1" stop-color="#d0d0d0"/></linearGradient></defs><circle cx="9" cy="9" r="7.6" fill="url(#cgplay)" stroke="#8a8a8a" stroke-width="1"/><path d="M7 5.5L12 9L7 12.5Z" fill="#6a6a6a"/></svg>
<svg class="a" style="left:731px;top:266px;opacity:0.55" width="18" height="18" viewBox="0 0 18 18"><defs><linearGradient id="cgplay2" x1="0" y1="0" x2="0" y2="1"><stop offset="0" stop-color="#ffffff"/><stop offset="1" stop-color="#d0d0d0"/></linearGradient></defs><circle cx="9" cy="9" r="7.6" fill="url(#cgplay2)" stroke="#8a8a8a" stroke-width="1"/><path d="M7 5.5L12 9L7 12.5Z" fill="#6a6a6a"/></svg>
<svg class="a" style="left:871px;top:266px;opacity:1" width="18" height="18" viewBox="0 0 18 18"><defs><linearGradient id="cgstop" x1="0" y1="0" x2="0" y2="1"><stop offset="0" stop-color="#ffffff"/><stop offset="1" stop-color="#d0d0d0"/></linearGradient></defs><circle cx="9" cy="9" r="7.6" fill="url(#cgstop)" stroke="#8a8a8a" stroke-width="1"/><rect x="5.8" y="5.8" width="6.4" height="6.4" fill="#5a5a5a"/></svg>
<svg class="a" style="left:1091.5px;top:266px;opacity:1" width="18" height="18" viewBox="0 0 18 18"><defs><linearGradient id="cgpause" x1="0" y1="0" x2="0" y2="1"><stop offset="0" stop-color="#ffffff"/><stop offset="1" stop-color="#d0d0d0"/></linearGradient></defs><circle cx="9" cy="9" r="7.6" fill="url(#cgpause)" stroke="#8a8a8a" stroke-width="1"/><rect x="5.8" y="5.3" width="2.2" height="7.4" fill="#5a5a5a"/><rect x="10" y="5.3" width="2.2" height="7.4" fill="#5a5a5a"/></svg>
<svg class="a" style="left:984px;top:266px" width="18" height="18" viewBox="0 0 18 18"><defs><linearGradient id="rg" x1="0" y1="0" x2="0" y2="1"><stop offset="0" stop-color="#f0705a"/><stop offset="1" stop-color="#c8201a"/></linearGradient></defs><path d="M5.7 1L12.3 1L17 5.7L17 12.3L12.3 17L5.7 17L1 12.3L1 5.7Z" fill="url(#rg)" stroke="#a01810" stroke-width="1"/><path d="M5.8 5.8L12.2 12.2M12.2 5.8L5.8 12.2" stroke="#fff" stroke-width="2.4" stroke-linecap="round"/></svg>
<div class="a" style="left:725px;top:297px;width:451px;height:67px;border:1px solid #000;background:#f0f0f0;"></div>
<div class="t" style="left:729px;top:326px;font-size:11px;">meas_2sh_kos(vanady1_1det,vanady1_2det, 4000, 2000, 1, 3, "#.$04")  #</div>
<div class="a" style="left:725px;top:376px;width:13px;height:13px;border:1px solid #8e8f8f;background:linear-gradient(135deg,#e0e0e0,#ffffff 60%);box-shadow:inset 0 0 0 1px #f4f4f4"></div>
<svg class="a" style="left:725px;top:376px" width="13" height="13" viewBox="0 0 13 13"><path d="M3.2 6.2L5.6 9.6L9.8 3" fill="none" stroke="#2c3fa0" stroke-width="1.8"/></svg>
<div class="t" style="left:742px;top:378px;font-size:11px;">Large icons</div>
<div class="t" style="left:588px;top:465px;font-size:12.4px;font-style:italic">Watch list</div>
<div class="a" style="left:587px;top:484px;width:589px;height:327px;border:1px solid #828790;background:#ffffff;"></div>
<div class="a" style="left:588px;top:485px;width:587px;height:21px;background:linear-gradient(#ffffff 0%,#ffffff 45%,#f3f4f6 50%,#f1f2f4 100%)"></div>
<div class="a" style="left:588px;top:506px;width:587px;height:1px;background:#d5d5d5;"></div>
<div class="a" style="left:609px;top:486px;width:1px;height:20px;background:#dfe2e6;"></div>
<div class="a" style="left:709px;top:486px;width:1px;height:20px;background:#dfe2e6;"></div>
<div class="a" style="left:831px;top:486px;width:1px;height:20px;background:#dfe2e6;"></div>
<div class="t sg" style="left:645px;top:491px;font-size:12px;transform-origin:0 0;transform:scaleX(0.95);">Name</div>
<div class="t sg" style="left:757px;top:491px;font-size:12px;transform-origin:0 0;transform:scaleX(0.95);">Value</div>
<div class="a" style="left:588px;top:507px;width:21px;height:18px;background:linear-gradient(#ffffff 0%,#ffffff 45%,#f3f4f6 50%,#f1f2f4 100%)"></div>
<div class="a" style="left:588px;top:525px;width:22px;height:1px;background:#d5d8dc;"></div>
<div class="a" style="left:610px;top:526px;width:222px;height:1px;background:#d8d8d8;"></div>
<div class="t sg" style="left:592px;top:512px;font-size:12px;transform-origin:0 0;transform:scaleX(0.85);">1</div>
<div class="t sg" style="left:613px;top:512px;font-size:12px;transform-origin:0 0;transform:scaleX(0.97);">Chopper</div>
<div class="t sg" style="left:713px;top:512px;font-size:12px;transform-origin:0 0;transform:scaleX(0.93);">Phased</div>
<div class="a" style="left:588px;top:526px;width:21px;height:18px;background:linear-gradient(#ffffff 0%,#ffffff 45%,#f3f4f6 50%,#f1f2f4 100%)"></div>
<div class="a" style="left:588px;top:544px;width:22px;height:1px;background:#d5d8dc;"></div>
<div class="a" style="left:610px;top:545px;width:222px;height:1px;background:#d8d8d8;"></div>
<div class="t sg" style="left:592px;top:531px;font-size:12px;transform-origin:0 0;transform:scaleX(0.85);">2</div>
<div class="t sg" style="left:613px;top:531px;font-size:12px;transform-origin:0 0;transform:scaleX(0.97);">Shutter</div>
<div class="t sg" style="left:713px;top:531px;font-size:12px;transform-origin:0 0;transform:scaleX(0.93);">Open</div>
<div class="a" style="left:588px;top:545px;width:21px;height:18px;background:linear-gradient(#ffffff 0%,#ffffff 45%,#f3f4f6 50%,#f1f2f4 100%)"></div>
<div class="a" style="left:588px;top:563px;width:22px;height:1px;background:#d5d8dc;"></div>
<div class="a" style="left:610px;top:564px;width:222px;height:1px;background:#d8d8d8;"></div>
<div class="t sg" style="left:592px;top:550px;font-size:12px;transform-origin:0 0;transform:scaleX(0.85);">3</div>
<div class="t sg" style="left:613px;top:550px;font-size:12px;transform-origin:0 0;transform:scaleX(0.97);">KK_pos</div>
<div class="t sg" style="left:713px;top:550px;font-size:12px;transform-origin:0 0;transform:scaleX(0.885);">287500</div>
<div class="a" style="left:588px;top:564px;width:21px;height:18px;background:linear-gradient(#ffffff 0%,#ffffff 45%,#f3f4f6 50%,#f1f2f4 100%)"></div>
<div class="a" style="left:588px;top:582px;width:22px;height:1px;background:#d5d8dc;"></div>
<div class="a" style="left:610px;top:583px;width:222px;height:1px;background:#d8d8d8;"></div>
<div class="t sg" style="left:592px;top:569px;font-size:12px;transform-origin:0 0;transform:scaleX(0.85);">4</div>
<div class="t sg" style="left:613px;top:569px;font-size:12px;transform-origin:0 0;transform:scaleX(0.97);">D1_pos</div>
<div class="t sg" style="left:713px;top:569px;font-size:12px;transform-origin:0 0;transform:scaleX(0.885);">5.27999</div>
<div class="a" style="left:588px;top:583px;width:21px;height:18px;background:linear-gradient(#ffffff 0%,#ffffff 45%,#f3f4f6 50%,#f1f2f4 100%)"></div>
<div class="a" style="left:588px;top:601px;width:22px;height:1px;background:#d5d8dc;"></div>
<div class="a" style="left:610px;top:602px;width:222px;height:1px;background:#d8d8d8;"></div>
<div class="t sg" style="left:592px;top:588px;font-size:12px;transform-origin:0 0;transform:scaleX(0.85);">5</div>
<div class="t sg" style="left:613px;top:588px;font-size:12px;transform-origin:0 0;transform:scaleX(0.97);">D2_pos</div>
<div class="t sg" style="left:713px;top:588px;font-size:12px;transform-origin:0 0;transform:scaleX(0.885);">12.965</div>
<div class="a" style="left:588px;top:602px;width:21px;height:18px;background:linear-gradient(#ffffff 0%,#ffffff 45%,#f3f4f6 50%,#f1f2f4 100%)"></div>
<div class="a" style="left:588px;top:620px;width:22px;height:1px;background:#d5d8dc;"></div>
<div class="a" style="left:610px;top:621px;width:222px;height:1px;background:#d8d8d8;"></div>
<div class="t sg" style="left:592px;top:607px;font-size:12px;transform-origin:0 0;transform:scaleX(0.85);">6</div>
<div class="t sg" style="left:613px;top:607px;font-size:12px;transform-origin:0 0;transform:scaleX(0.97);">V1_1det</div>
<div class="t sg" style="left:713px;top:607px;font-size:12px;transform-origin:0 0;transform:scaleX(0.885);">1</div>
<div class="a" style="left:588px;top:621px;width:21px;height:18px;background:linear-gradient(#ffffff 0%,#ffffff 45%,#f3f4f6 50%,#f1f2f4 100%)"></div>
<div class="a" style="left:588px;top:639px;width:22px;height:1px;background:#d5d8dc;"></div>
<div class="a" style="left:610px;top:640px;width:222px;height:1px;background:#d8d8d8;"></div>
<div class="t sg" style="left:592px;top:626px;font-size:12px;transform-origin:0 0;transform:scaleX(0.85);">7</div>
<div class="t sg" style="left:613px;top:626px;font-size:12px;transform-origin:0 0;transform:scaleX(0.97);">V1_2det</div>
<div class="t sg" style="left:713px;top:626px;font-size:12px;transform-origin:0 0;transform:scaleX(0.885);">1</div>
<div class="a" style="left:588px;top:640px;width:21px;height:18px;background:linear-gradient(#ffffff 0%,#ffffff 45%,#f3f4f6 50%,#f1f2f4 100%)"></div>
<div class="a" style="left:588px;top:658px;width:22px;height:1px;background:#d5d8dc;"></div>
<div class="a" style="left:610px;top:659px;width:222px;height:1px;background:#d8d8d8;"></div>
<div class="t sg" style="left:592px;top:645px;font-size:12px;transform-origin:0 0;transform:scaleX(0.85);">8</div>
<div class="t sg" style="left:613px;top:645px;font-size:12px;transform-origin:0 0;transform:scaleX(0.97);">g_table</div>
<div class="t sg" style="left:713px;top:645px;font-size:12px;transform-origin:0 0;transform:scaleX(0.885);">122</div>
<div class="a" style="left:588px;top:659px;width:21px;height:18px;background:linear-gradient(#ffffff 0%,#ffffff 45%,#f3f4f6 50%,#f1f2f4 100%)"></div>
<div class="a" style="left:588px;top:677px;width:22px;height:1px;background:#d5d8dc;"></div>
<div class="a" style="left:610px;top:678px;width:222px;height:1px;background:#d8d8d8;"></div>
<div class="t sg" style="left:592px;top:664px;font-size:12px;transform-origin:0 0;transform:scaleX(0.85);">9</div>
<div class="t sg" style="left:613px;top:664px;font-size:12px;transform-origin:0 0;transform:scaleX(0.97);">Lauda_Final</div>
<div class="t sg" style="left:713px;top:664px;font-size:12px;transform-origin:0 0;transform:scaleX(0.885);">40</div>
<div class="a" style="left:588px;top:678px;width:21px;height:18px;background:linear-gradient(#ffffff 0%,#ffffff 45%,#f3f4f6 50%,#f1f2f4 100%)"></div>
<div class="a" style="left:588px;top:696px;width:22px;height:1px;background:#d5d8dc;"></div>
<div class="a" style="left:610px;top:697px;width:222px;height:1px;background:#d8d8d8;"></div>
<div class="t sg" style="left:592px;top:683px;font-size:12px;transform-origin:0 0;transform:scaleX(0.85);">10</div>
<div class="t sg" style="left:613px;top:683px;font-size:12px;transform-origin:0 0;transform:scaleX(0.97);">Lauda_Control</div>
<div class="t sg" style="left:713px;top:683px;font-size:12px;transform-origin:0 0;transform:scaleX(0.885);">1</div>
<div class="a" style="left:588px;top:697px;width:21px;height:18px;background:linear-gradient(#ffffff 0%,#ffffff 45%,#f3f4f6 50%,#f1f2f4 100%)"></div>
<div class="a" style="left:588px;top:715px;width:22px;height:1px;background:#d5d8dc;"></div>
<div class="a" style="left:610px;top:716px;width:222px;height:1px;background:#d8d8d8;"></div>
<div class="t sg" style="left:592px;top:702px;font-size:12px;transform-origin:0 0;transform:scaleX(0.85);">11</div>
<div class="t sg" style="left:613px;top:702px;font-size:12px;transform-origin:0 0;transform:scaleX(0.97);">Lauda_Bath</div>
<div class="t sg" style="left:713px;top:702px;font-size:12px;transform-origin:0 0;transform:scaleX(0.885);">49.166</div>
<div class="a" style="left:588px;top:716px;width:21px;height:18px;background:linear-gradient(#ffffff 0%,#ffffff 45%,#f3f4f6 50%,#f1f2f4 100%)"></div>
<div class="a" style="left:588px;top:734px;width:22px;height:1px;background:#d5d8dc;"></div>
<div class="a" style="left:610px;top:735px;width:222px;height:1px;background:#d8d8d8;"></div>
<div class="t sg" style="left:592px;top:721px;font-size:12px;transform-origin:0 0;transform:scaleX(0.85);">12</div>
<div class="t sg" style="left:613px;top:721px;font-size:12px;transform-origin:0 0;transform:scaleX(0.97);">Lauda_T1</div>
<div class="t sg" style="left:713px;top:721px;font-size:12px;transform-origin:0 0;transform:scaleX(0.885);">41.5870</div>
<div class="a" style="left:588px;top:735px;width:21px;height:22px;background:linear-gradient(#ffffff 0%,#ffffff 45%,#f3f4f6 50%,#f1f2f4 100%)"></div>
<div class="a" style="left:588px;top:757px;width:22px;height:1px;background:#d5d8dc;"></div>
<div class="a" style="left:610px;top:758px;width:222px;height:1px;background:#d8d8d8;"></div>
<div class="t sg" style="left:592px;top:742px;font-size:12px;transform-origin:0 0;transform:scaleX(0.85);">13</div>
<div class="t sg" style="left:613px;top:742px;font-size:12px;transform-origin:0 0;transform:scaleX(0.97);">Time_now</div>
<div class="t sg" style="left:713px;top:742px;font-size:12px;transform-origin:0 0;transform:scaleX(0.885);">471039</div>
<div class="a" style="left:588px;top:758px;width:21px;height:18px;background:linear-gradient(#ffffff 0%,#ffffff 45%,#f3f4f6 50%,#f1f2f4 100%)"></div>
<div class="a" style="left:588px;top:776px;width:22px;height:1px;background:#d5d8dc;"></div>
<div class="a" style="left:610px;top:777px;width:222px;height:1px;background:#d8d8d8;"></div>
<div class="t sg" style="left:592px;top:764px;font-size:12px;transform-origin:0 0;transform:scaleX(0.85);">14</div>
<div class="t sg" style="left:613px;top:764px;font-size:12px;transform-origin:0 0;transform:scaleX(0.97);">Time_total</div>
<div class="t sg" style="left:713px;top:764px;font-size:12px;transform-origin:0 0;transform:scaleX(0.885);">800000</div>
<div class="a" style="left:588px;top:777px;width:21px;height:33px;background:#f0f0f0;"></div>
<div class="a" style="left:609px;top:507px;width:1px;height:270px;background:#dfe2e6;"></div>
<div class="a" style="left:709px;top:507px;width:1px;height:271px;background:#d8d8d8;"></div>
<div class="a" style="left:831px;top:507px;width:1px;height:271px;background:#d8d8d8;"></div>
<div class="a" style="left:1213px;top:869px;width:1px;height:1px;background:#b4b4b4;"></div>
<div class="a" style="left:1214px;top:870px;width:1px;height:1px;background:#fff;"></div>
<div class="a" style="left:1210px;top:869px;width:1px;height:1px;background:#b4b4b4;"></div>
<div class="a" style="left:1211px;top:870px;width:1px;height:1px;background:#fff;"></div>
<div class="a" style="left:1207px;top:869px;width:1px;height:1px;background:#b4b4b4;"></div>
<div class="a" style="left:1208px;top:870px;width:1px;height:1px;background:#fff;"></div>
<div class="a" style="left:1213px;top:866px;width:1px;height:1px;background:#b4b4b4;"></div>
<div class="a" style="left:1214px;top:867px;width:1px;height:1px;background:#fff;"></div>
<div class="a" style="left:1210px;top:866px;width:1px;height:1px;background:#b4b4b4;"></div>
<div class="a" style="left:1211px;top:867px;width:1px;height:1px;background:#fff;"></div>
<div class="a" style="left:1213px;top:863px;width:1px;height:1px;background:#b4b4b4;"></div>
<div class="a" style="left:1214px;top:864px;width:1px;height:1px;background:#fff;"></div>
<svg class="a" style="left:11px;top:8px;" width="16" height="19" viewBox="0 0 16 19"><ellipse cx="4.3" cy="16.3" rx="3.2" ry="1.9" fill="#c8661a"/><ellipse cx="11.2" cy="16.3" rx="3.2" ry="1.9" fill="#c8661a"/><path d="M5 15L6 10.5L10 10.5L11 15Z" fill="#b85a14"/><path d="M2.2 12.2L5.2 10.2L10.5 10.2L13.8 11.2L13.6 12.6L10.5 12.4L5.2 12.6L2.6 13.4Z" fill="#c0621a"/><rect x="5" y="11.3" width="5.6" height="1.4" fill="#e8e0d8"/><ellipse cx="7.6" cy="7.8" rx="3.1" ry="3.3" fill="#c45c10"/><ellipse cx="7" cy="8.4" rx="1.5" ry="1.5" fill="#ff8c1a"/><path d="M4.6 5.2C4.6 2.6 7 1.6 9.2 2C11.4 2.4 12 4.2 11.4 6.4C10 5 7 4.4 4.6 5.2Z" fill="#2a2a90"/><circle cx="7.3" cy="3.6" r="0.8" fill="#e8c060"/></svg>
<div class="t sg" style="left:24.5px;top:57.5px;font-size:22.5px;color:#00e400;-webkit-text-stroke:0.5px #00e400;transform-origin:0 0;transform:scaleX(.93)">R</div>
<div class="a" style="left:52px;top:56px;width:24px;height:24px;background:#ffffff;"></div>
<div class="t sg" style="left:54.5px;top:49px;font-size:33px;font-style:italic;font-weight:bold;color:#b8b8b8;transform-origin:0 0;transform:translate(1.2px,1.2px) scaleX(.7)">π</div>
<div class="t sg" style="left:54.5px;top:49px;font-size:33px;font-style:italic;font-weight:bold;color:#0a8088;transform-origin:0 0;transform:scaleX(.7)">π</div>
<div class="t sg" style="left:69px;top:55px;font-size:18px;color:#000">*</div>
<svg class="a" style="left:83px;top:55px;" width="25" height="26" viewBox="0 0 25 26"><defs><linearGradient id="cyl" x1="0" x2="1"><stop offset="0" stop-color="#3a58c8"/><stop offset=".5" stop-color="#7090e8"/><stop offset="1" stop-color="#90a8f0"/></linearGradient><linearGradient id="cub" x1="0" y1="0" x2="0" y2="1"><stop offset="0" stop-color="#f09038"/><stop offset="1" stop-color="#c83818"/></linearGradient><linearGradient id="con" x1="0" x2="1"><stop offset="0" stop-color="#5a9a30"/><stop offset=".55" stop-color="#c0e090"/><stop offset="1" stop-color="#6aa838"/></linearGradient></defs><path d="M14 3C14 1.6 23 1.6 23 3L23 14.5C23 16 14 16 14 14.5Z" fill="url(#cyl)"/><ellipse cx="18.5" cy="3" rx="4.5" ry="1.2" fill="#90a8f0"/><path d="M1.5 7.5L8 4.8L16 6.4L16 18L9.5 21L1.5 18.4Z" fill="url(#cub)"/><path d="M1.5 7.5L9.5 9.4L16 6.4L8 4.8Z" fill="#f0a050"/><path d="M9.5 9.4L9.5 21" stroke="#e06028" stroke-width=".6"/><path d="M16.3 9.5L23.2 22C23.2 25 9.8 25 9.8 22Z" fill="url(#con)"/></svg>
<svg class="a" style="left:112px;top:54px;" width="28" height="28" viewBox="0 0 28 28"><path d="M2.5 24C7 20 8.5 3 10.4 3C12.5 3 17 16 25.5 23.6" fill="none" stroke="#000" stroke-width="2.1"/><path d="M10.3 2.4V25.8M1.8 19.4H26.3" stroke="#ff0000" stroke-width="2.1" fill="none"/></svg>
<svg class="a" style="left:145px;top:55px;" width="24" height="26" viewBox="0 0 24 26"><path d="M2.5 4.8H21.7" stroke="#000" stroke-width="1.9"/><circle cx="2.8" cy="4.8" r="1.5" fill="#000"/><path d="M2.5 9.2H21.7" stroke="#000" stroke-width="1.9"/><circle cx="2.8" cy="9.2" r="1.5" fill="#000"/><path d="M2.5 13.7H21.7" stroke="#000" stroke-width="1.9"/><circle cx="2.8" cy="13.7" r="1.5" fill="#000"/><path d="M2.5 18.2H21.7" stroke="#000" stroke-width="1.9"/><circle cx="2.8" cy="18.2" r="1.5" fill="#000"/><path d="M2.5 22.7H21.7" stroke="#000" stroke-width="1.9"/><circle cx="2.8" cy="22.7" r="1.5" fill="#000"/></svg>
<svg class="a" style="left:175px;top:55px;" width="25" height="26" viewBox="0 0 25 26"><defs><linearGradient id="bo" x1="0" y1="0" x2="0" y2="1"><stop offset="0" stop-color="#f8c070"/><stop offset="1" stop-color="#e88020"/></linearGradient><linearGradient id="bg" x1="0" y1="0" x2="0" y2="1"><stop offset="0" stop-color="#80c070"/><stop offset="1" stop-color="#2a8030"/></linearGradient><linearGradient id="bb" x1="0" y1="0" x2="0" y2="1"><stop offset="0" stop-color="#90c8f0"/><stop offset="1" stop-color="#2a70c0"/></linearGradient></defs><rect x="1.8" y="11.5" width="10.6" height="12.8" rx="1.2" fill="url(#bg)" stroke="#1a5a20" stroke-width=".7"/><rect x="12.4" y="11.5" width="10.8" height="12.8" rx="1.2" fill="url(#bb)" stroke="#1a4a80" stroke-width=".7"/><rect x="6.6" y="1.4" width="10.8" height="11" rx="1.2" fill="url(#bo)" stroke="#b06010" stroke-width=".7"/><path d="M6.6 3L9 1.4L17.4 1.4L15 3Z" fill="#fbd8a0"/><rect x="3.6" y="14.4" width="7" height="8" fill="#b8e0b0" opacity=".7"/><rect x="14.4" y="14.4" width="7" height="8" fill="#c0e0f8" opacity=".7"/><rect x="8.6" y="3.8" width="7" height="7" fill="#fbe0b8" opacity=".7"/><text x="12.1" y="10.3" text-anchor="middle" font-family="Liberation Sans, sans-serif" font-weight="bold" font-size="7.5" fill="#c82020">H</text><text x="7.1" y="21.4" text-anchor="middle" font-family="Liberation Sans, sans-serif" font-weight="bold" font-size="8" fill="#1a6a28">F</text><text x="17.9" y="21.4" text-anchor="middle" font-family="Liberation Sans, sans-serif" font-weight="bold" font-size="8" fill="#1a50a8">C</text></svg>
<svg class="a" style="left:207.5px;top:54px;" width="26" height="27" viewBox="0 0 26 27"><defs><radialGradient id="tg" cx=".45" cy=".4" r=".6"><stop offset="0" stop-color="#f05050"/><stop offset="1" stop-color="#d01828"/></radialGradient></defs><ellipse cx="11.5" cy="14" rx="9.6" ry="10.8" fill="url(#tg)" stroke="#e83040" stroke-width="1.6" stroke-dasharray="1.6 1.2"/><ellipse cx="11" cy="21.5" rx="8" ry="2.6" fill="#c01020" opacity=".7"/><ellipse cx="15" cy="11.5" rx="5.6" ry="6" fill="#e02838"/><ellipse cx="15.5" cy="11" rx="4.6" ry="4" fill="#18a838"/><path d="M14 8.2L21.5 7.2L22.8 11.8L15 13.6Z" fill="#20b040"/><ellipse cx="22" cy="9.6" rx="1.4" ry="2.3" fill="#d8f0d8"/><circle cx="12.3" cy="5.6" r="1" fill="#3838a0"/><circle cx="10.5" cy="14.8" r="1" fill="#3838a0"/><circle cx="18.5" cy="15.8" r="1" fill="#3838a0"/><circle cx="12.3" cy="5.6" r=".5" fill="#e8d040"/><path d="M3 14.5L1.6 16.4L3.6 17Z" fill="#18a030"/></svg>
<svg class="a" style="left:45px;top:348px;" width="24" height="26" viewBox="0 0 24 26"><defs><linearGradient id="brs" x1="0" y1="0" x2="1" y2="1"><stop offset="0" stop-color="#f8f070"/><stop offset="1" stop-color="#d8c020"/></linearGradient></defs><ellipse cx="13" cy="22.6" rx="7" ry="1.6" fill="#d8d8d8" opacity=".7"/><path d="M16.2 2.6C17.2 1.4 19.6 2 18.8 4L14.6 12.2L11.6 10.8Z" fill="#d08a38"/><path d="M16.6 3.4C17.2 2.6 18.2 2.8 18 3.8" stroke="#f0c890" stroke-width=".8" fill="none"/><path d="M9.4 10L15.8 12.6L15.2 14L8.8 11.4Z" fill="#9058a8"/><path d="M8.8 11.4L15.2 14C16 17 16 20 15.6 23.4C11 23.6 6 21.4 2.4 18.6C5 16.6 7.4 14 8.8 11.4Z" fill="url(#brs)"/><path d="M10 13L6 19.6M12 13.6L9.6 21.6M13.8 14.2L13 22.8" stroke="#c8b020" stroke-width=".5" fill="none"/></svg>
<svg class="a" style="left:82px;top:348px;" width="24" height="26" viewBox="0 0 24 26"><defs><linearGradient id="dr" x1="0" x2="1"><stop offset="0" stop-color="#f09030"/><stop offset=".5" stop-color="#fcd070"/><stop offset="1" stop-color="#f09030"/></linearGradient></defs><rect x="5.6" y="3.2" width="3" height="7" fill="#f8e0b0" stroke="#b02848" stroke-width=".8"/><path d="M5.4 11L12.4 4.4L19 11L19 24.4L5.4 24.4Z" fill="#f4f4f4" stroke="#a0a8a8" stroke-width=".9"/><path d="M5.4 24.4H19" stroke="#409090" stroke-width="1"/><path d="M8.8 24V15C8.8 12.6 10.4 11.8 12.3 11.8C14.2 11.8 15.8 12.6 15.8 15V24Z" fill="url(#dr)" stroke="#c07020" stroke-width=".8"/><path d="M1.8 13.6L12.4 3.2L22.8 13.6" fill="none" stroke="#b02040" stroke-width="2.4" stroke-linejoin="miter"/></svg>
<svg class="a" style="left:115px;top:351.3px;" width="20" height="20" viewBox="0 0 20 20"><defs><radialGradient id="nb" cx=".4" cy=".25" r=".8"><stop offset="0" stop-color="#38c8e0"/><stop offset=".45" stop-color="#1890b0"/><stop offset="1" stop-color="#0a6488"/></radialGradient></defs><circle cx="10" cy="10" r="9.8" fill="url(#nb)"/><path d="M4.6 10L10.4 4.6V8H15V12H10.4V15.4Z" fill="#c4e6ee"/></svg>
<svg class="a" style="left:146px;top:351.3px;" width="20" height="20" viewBox="0 0 20 20"><defs><radialGradient id="nf" cx=".4" cy=".25" r=".8"><stop offset="0" stop-color="#38c8e0"/><stop offset=".45" stop-color="#1890b0"/><stop offset="1" stop-color="#0a6488"/></radialGradient></defs><circle cx="10" cy="10" r="9.8" fill="url(#nf)"/><path d="M15.4 10L9.6 4.6V8H5V12H9.6V15.4Z" fill="#c4e6ee"/></svg>
<svg class="a" style="left:180px;top:349px;" width="25" height="25" viewBox="0 0 25 25"><path d="M12.5 1L16.2 5.6H13.8V11.2H19.4V8.6L24 12.4L19.4 16.2V13.7H13.8V19.4H16.2L12.5 24L8.8 19.4H11.2V13.7H5.6V16.2L1 12.4L5.6 8.6V11.2H11.2V5.6H8.8Z" fill="#1a6484"/></svg>
<svg class="a" style="left:211px;top:349px;" width="28" height="25" viewBox="0 0 28 25"><rect x="6.5" y="10.5" width="17.5" height="12" fill="#ffffff" stroke="#9ad4e4" stroke-width="1"/><path d="M17.4 9.8L25.6 4.6" stroke="#d88820" stroke-width="4.2" stroke-linecap="round"/><path d="M17.6 9.4L25.4 4.4" stroke="#fcc060" stroke-width="2" stroke-linecap="round"/><circle cx="10.4" cy="13.8" r="7.3" fill="#bfe4ee" fill-opacity=".85" stroke="#a8d8e6" stroke-width="1"/><rect x="6.6" y="10.6" width="8" height="8.6" fill="#8ccadb" opacity=".9"/><path d="M7.6 12.6H13.6M7.6 14.8H13.6M7.6 17H13.6" stroke="#2a8aa4" stroke-width="1.1"/></svg>
<svg class="a" style="left:249px;top:350px;" width="24" height="23" viewBox="0 0 24 23"><defs><linearGradient id="fl" x1="0" y1="0" x2="0" y2="1"><stop offset="0" stop-color="#1a5a80"/><stop offset="1" stop-color="#1a4c6c"/></linearGradient></defs><rect x=".3" y=".3" width="23.4" height="22.4" rx="2.2" fill="url(#fl)"/><rect x="4.4" y="1" width="14.8" height="8.6" fill="#aebfd2"/><rect x="4.4" y="1" width="14.8" height="1.5" fill="#c87838"/><path d="M7.6 4.6H17M7.6 6.8H17" stroke="#1a4c6c" stroke-width="1.1"/><circle cx="2.2" cy="2.8" r=".7" fill="#e8f0f8"/><circle cx="21.6" cy="2.8" r=".7" fill="#e8f0f8"/><rect x="6.8" y="15.4" width="10.4" height="6.8" fill="#a8b4c0"/><rect x="8.4" y="16" width="2.6" height="6" fill="#1a3a58"/></svg>
<svg class="a" style="left:30px;top:435px;" width="22" height="24" viewBox="0 0 22 24"><defs><linearGradient id="so" x1="0" y1="0" x2="1" y2="0"><stop offset="0" stop-color="#e88a20"/><stop offset=".45" stop-color="#f8a838"/><stop offset="1" stop-color="#a04808"/></linearGradient><linearGradient id="sgn" x1="0" y1="0" x2="1" y2="0"><stop offset="0" stop-color="#2a7a30"/><stop offset=".5" stop-color="#30e038"/><stop offset="1" stop-color="#148a20"/></linearGradient></defs><path d="M2 13V4.6H14V1.4L20.6 7L14 12.6V9H6V13Z" fill="url(#so)"/><path d="M20.4 10.6V19.4H8V22.8L1.6 17.2L8 11.6V15.4H16.4V10.6Z" fill="url(#sgn)"/></svg>
<svg class="a" style="left:60px;top:435px;" width="22" height="24" viewBox="0 0 22 24"><defs><linearGradient id="fb" x1="0" y1="0" x2="0" y2="1"><stop offset="0" stop-color="#a8c8f0"/><stop offset="1" stop-color="#5890d8"/></linearGradient></defs><path d="M1.5 19L7 17V21.4Z" fill="#d8d8e0" opacity=".7"/><path d="M6 3L13 1.6V20.4L6 21.6Z" fill="#fafcff" stroke="#d8e0ec" stroke-width=".6"/><path d="M8 2.4L14.4 1.8V20L8 21Z" fill="#eef4fc"/><path d="M14 3.4L19.8 1.4V19L14.6 22Z" fill="url(#fb)"/><path d="M5 14L13.6 13V20.6L5 21.4Z" fill="#e6eef8"/></svg>
<svg class="a" style="left:94.0px;top:435.79999999999995px;" width="22.2" height="22.2" viewBox="0 0 22.2 22.2"><defs><radialGradient id="lcfirst" cx=".42" cy=".25" r=".85"><stop offset="0" stop-color="#2a98d0"/><stop offset=".6" stop-color="#1474b4"/><stop offset="1" stop-color="#0c5a98"/></radialGradient></defs><circle cx="11.1" cy="11.1" r="10.3" fill="url(#lcfirst)" stroke="#0a3458" stroke-width="1.3"/><rect x="6.4" y="7" width="2.2" height="8.4" fill="#fff"/><path d="M15.6 6.8V15.6L8.8 11.2Z" fill="#fff"/></svg>
<svg class="a" style="left:122.9px;top:435.79999999999995px;" width="22.2" height="22.2" viewBox="0 0 22.2 22.2"><defs><radialGradient id="lcprev" cx=".42" cy=".25" r=".85"><stop offset="0" stop-color="#c8f000"/><stop offset=".5" stop-color="#78c810"/><stop offset="1" stop-color="#3a9a18"/></radialGradient></defs><circle cx="11.1" cy="11.1" r="10.3" fill="url(#lcprev)" stroke="#244c08" stroke-width="1.3"/><path d="M5 11.2L10.4 5.8L11.8 7.4L9 10.1H17V12.3H9L11.8 15L10.4 16.6Z" fill="#fff"/></svg>
<svg class="a" style="left:152.1px;top:435.79999999999995px;" width="22.2" height="22.2" viewBox="0 0 22.2 22.2"><defs><radialGradient id="lcnext" cx=".42" cy=".25" r=".85"><stop offset="0" stop-color="#c8f000"/><stop offset=".5" stop-color="#78c810"/><stop offset="1" stop-color="#3a9a18"/></radialGradient></defs><circle cx="11.1" cy="11.1" r="10.3" fill="url(#lcnext)" stroke="#244c08" stroke-width="1.3"/><path d="M17.2 11.2L11.8 5.8L10.4 7.4L13.2 10.1H5.2V12.3H13.2L10.4 15L11.8 16.6Z" fill="#fff"/></svg>
<svg class="a" style="left:180.9px;top:435.79999999999995px;" width="22.2" height="22.2" viewBox="0 0 22.2 22.2"><defs><radialGradient id="lclast" cx=".42" cy=".25" r=".85"><stop offset="0" stop-color="#2a98d0"/><stop offset=".6" stop-color="#1474b4"/><stop offset="1" stop-color="#0c5a98"/></radialGradient></defs><circle cx="11.1" cy="11.1" r="10.3" fill="url(#lclast)" stroke="#0a3458" stroke-width="1.3"/><rect x="13.6" y="7" width="2.2" height="8.4" fill="#fff"/><path d="M6.6 6.8V15.6L13.4 11.2Z" fill="#fff"/></svg>
<svg class="a" style="left:216px;top:436.5px;" width="24" height="22" viewBox="0 0 24 22"><defs><linearGradient id="dg" x1="0" y1="0" x2="0" y2="1"><stop offset="0" stop-color="#8ad030"/><stop offset="1" stop-color="#58a818"/></linearGradient></defs><rect x="3" y="2" width="14.6" height="17" fill="#f6f6f6" stroke="#b0b0b0" stroke-width="1"/><ellipse cx="14" cy="20.4" rx="7" ry="1.2" fill="#b8b8b8" opacity=".6"/><path d="M9.2 4.6H17.8V11H21.6L13.5 20.4L5.4 11H9.2Z" fill="url(#dg)" stroke="#6ab028" stroke-width=".5"/></svg>
</div></body></html>
